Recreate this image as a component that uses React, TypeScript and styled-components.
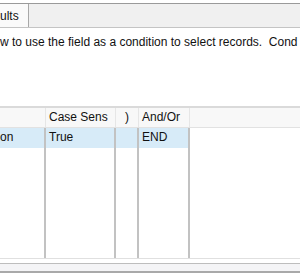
import styled, { createGlobalStyle } from 'styled-components';

const Global = createGlobalStyle`
  html, body {
    margin: 0;
    padding: 0;
    background: #ffffff;
    overflow: hidden;
  }
  body {
    font-family: "Liberation Sans", Arial, sans-serif;
    font-size: 12px;
    color: #111111;
  }
`

const Window = styled.div`
  width: 300px;
  height: 277px;
  display: flex;
  flex-direction: column;
  background: #ffffff;
  padding-top: 3px;
  box-sizing: border-box;
`

const TabStrip = styled.div`
  height: 25px;
  display: flex;
  background: #f0f0f0;
  border-top: 1px solid #9a9a9a;
  border-bottom: 1px solid #c4c4c4;
  box-sizing: border-box;
`

const Tab = styled.div`
  width: 29px;
  background: #fafafa;
  border-right: 1px solid #a8a8a8;
  box-sizing: border-box;
  display: flex;
  align-items: center;
  padding: 1px 0 0 0;
  line-height: 14px;
`

const Hint = styled.p`
  margin: 7px 0 0 0;
  line-height: 14px;
  white-space: nowrap;
  height: 71px;
`

const Grid = styled.div`
  flex: 1;
  display: flex;
  flex-direction: column;
  border-top: 2px solid #dadada;
`

const Row = styled.div<{ $header?: boolean; $selected?: boolean }>`
  display: flex;
  height: 20px;
  background: ${p => (p.$header ? '#f8f8f8' : p.$selected ? '#d7ebf8' : '#ffffff')};
  border-bottom: ${p => (p.$header ? '1px solid #e2e2e2' : 'none')};
  box-sizing: border-box;
  line-height: 19px;
`

const Fill = styled.div`
  flex: 1;
  display: flex;
`

const Cell = styled.div<{ $w: number; $header?: boolean; $flush?: boolean }>`
  width: ${p => p.$w}px;
  flex: none;
  box-sizing: border-box;
  padding-left: ${p => (p.$flush ? 0 : p.$w > 30 ? 3 : 9)}px;
  white-space: nowrap;
  overflow: hidden;
  border-right: ${p => (p.$header ? '1px solid #e6e6e6' : '2px solid #c2c2c2')};
`

const Blank = styled.div<{ $header?: boolean }>`
  flex: 1;
  background: ${p => (p.$header ? '#f8f8f8' : '#ffffff')};
`

const Footer = styled.div`
  height: 19px;
  display: flex;
  flex-direction: column;
  border-top: 1px solid #e0e0e0;
  box-sizing: border-box;
`

const Bar = styled.div`
  height: 7px;
  margin-top: 4px;
  background: #f4f4f6;
  border-top: 1px solid #bdbdbd;
  border-bottom: 2px solid #a9a9a9;
`

const cols = [46, 70, 23, 51]

export default function App() {
  return (
    <>
      <Global />
      <Window>
        <TabStrip>
          <Tab>ults</Tab>
        </TabStrip>
        <Hint>w to use the field as a condition to select records.&nbsp; Cond</Hint>
        <Grid>
          <Row $header>
            <Cell $w={cols[0]} $header></Cell>
            <Cell $w={cols[1]} $header>Case Sens</Cell>
            <Cell $w={cols[2]} $header>)</Cell>
            <Cell $w={cols[3]} $header>And/Or</Cell>
            <Blank $header />
          </Row>
          <Row $selected>
            <Cell $w={cols[0]} $flush>on</Cell>
            <Cell $w={cols[1]}>True</Cell>
            <Cell $w={cols[2]}></Cell>
            <Cell $w={cols[3]}>END</Cell>
            <Blank />
          </Row>
          <Fill>
            <Cell $w={cols[0]}></Cell>
            <Cell $w={cols[1]}></Cell>
            <Cell $w={cols[2]}></Cell>
            <Cell $w={cols[3]}></Cell>
            <Blank />
          </Fill>
        </Grid>
        <Footer>
          <Bar />
        </Footer>
      </Window>
    </>
  )
}
